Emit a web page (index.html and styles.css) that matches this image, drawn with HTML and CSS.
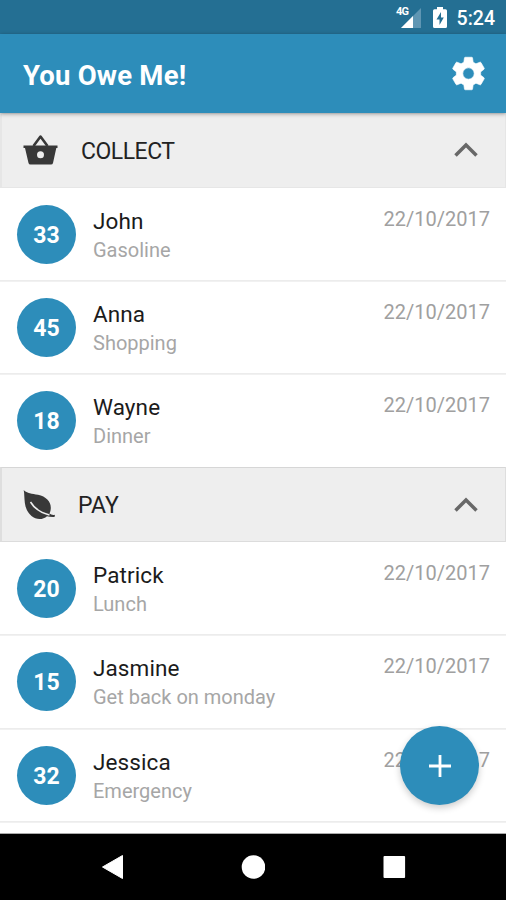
FILE: index.html
```html
<!DOCTYPE html>
<html lang="en">
<head>
<meta charset="utf-8">
<title>You Owe Me!</title>
<link rel="stylesheet" href="styles.css">
</head>
<body>
<div class="screen">
  <div class="status">
    <svg class="signal" width="28" height="22" viewBox="0 0 28 22"><path d="M27 1V21H7z" fill="#5f96b3"/><path d="M19 9V21H7z" fill="#fff"/></svg>
    <span class="network">4G</span>
    <svg class="battery" width="14" height="21" viewBox="0 0 14 21"><path d="M4 0h6v2.300h2.500q1.500 0 1.500 1.500v15.700q0 1.500-1.500 1.500h-11Q0 21 0 19.500V3.800q0-1.500 1.500-1.500H4z" fill="#fff"/><path d="M8 5L3.500 12.500H6.500V18L10.800 10.500H8z" fill="#246f93"/></svg>
    <span class="clock">5:24</span>
  </div>
  <header class="appbar">
    <h1>You Owe Me!</h1>
    <svg class="gear" width="39" height="39" viewBox="0 0 24 24"><path fill="#fff" stroke="#fff" stroke-width=".4" d="M19.430 12.980c.04-.32.07-.64.07-.98s-.03-.66-.07-.98l2.110-1.650c.19-.15.24-.42.12-.64l-2-3.460c-.12-.22-.39-.3-.61-.22l-2.490 1c-.52-.4-1.080-.73-1.690-.98l-.38-2.650C14.460 2.180 14.250 2 14 2h-4c-.25 0-.46.18-.49.42l-.38 2.650c-.61.25-1.170.59-1.690.98l-2.490-1c-.23-.09-.49 0-.61.22l-2 3.460c-.13.22-.07.49.12.64l2.110 1.650c-.04.32-.07.65-.07.98s.03.66.07.98l-2.110 1.650c-.19.15-.24.42-.12.64l2 3.460c.12.22.39.3.61.22l2.490-1c.52.4 1.080.73 1.690.98l.38 2.650c.03.24.24.42.49.42h4c.25 0 .46-.18.49-.42l.38-2.650c.61-.25 1.170-.59 1.690-.98l2.490 1c.23.09.49 0 .61-.22l2-3.460c.12-.22.07-.49-.12-.64l-2.110-1.650zM12 15.500c-1.930 0-3.500-1.570-3.500-3.500s1.570-3.500 3.500-3.500 3.500 1.570 3.500 3.500-1.570 3.500-3.500 3.500z"/></svg>
  </header>
  <main class="content">
    <section>
      <div class="group">
        <svg width="36" height="32" viewBox="0 0 36 32"><path d="M10.500 12L17.500 2.500L24.500 12" fill="none" stroke="#383838" stroke-width="2.600" stroke-linejoin="round"/><path d="M.5 11.500H34.500V14H33.300L30 29q-.4 1.500-2 1.500H7.500q-1.600 0-2-1.500L2 14H.5z" fill="#383838"/><circle cx="17.500" cy="20.800" r="3.500" fill="#eee"/></svg>
        <h2 class="collect">COLLECT</h2>
        <svg class="chevron" width="26" height="18" viewBox="0 0 26 18"><path d="M2.500 14.500L13 4L23.500 14.500" fill="none" stroke="#686868" stroke-width="3.500"/></svg>
      </div>
      <div class="row"><span class="amount">33</span><div class="info"><div class="name">John</div><div class="note">Gasoline</div></div><time>22/10/2017</time></div>
      <div class="row"><span class="amount">45</span><div class="info"><div class="name">Anna</div><div class="note">Shopping</div></div><time>22/10/2017</time></div>
      <div class="row"><span class="amount">18</span><div class="info"><div class="name">Wayne</div><div class="note">Dinner</div></div><time>22/10/2017</time></div>
    </section>
    <section>
      <div class="group outlined">
        <svg width="36" height="32" viewBox="0 0 36 32"><path d="M.7 1C4 4.500 9 4.800 15 5.800C23 7.500 28 12.500 27.800 19C27.700 21.500 27.200 23 26.400 24.600C28 25.800 30 26.200 32 25.700L31.500 28C28.500 28.300 26 27.800 24 27.200C20 31 13 31 8.500 27C1.500 20.600 1.800 14 1.300 7Q1.200 3.500.7 1z" fill="#383838"/><path d="M7.500 13C11 19 17 23.500 26.500 26" fill="none" stroke="#eee" stroke-width="1.500"/></svg>
        <h2 class="pay">PAY</h2>
        <svg class="chevron" width="26" height="18" viewBox="0 0 26 18"><path d="M2.500 14.500L13 4L23.500 14.500" fill="none" stroke="#686868" stroke-width="3.500"/></svg>
      </div>
      <div class="row"><span class="amount">20</span><div class="info"><div class="name">Patrick</div><div class="note">Lunch</div></div><time>22/10/2017</time></div>
      <div class="row"><span class="amount">15</span><div class="info"><div class="name">Jasmine</div><div class="note">Get back on monday</div></div><time>22/10/2017</time></div>
      <div class="row"><span class="amount">32</span><div class="info"><div class="name">Jessica</div><div class="note">Emergency</div></div><time>22/10/2017</time></div>
      <div class="row"></div>
    </section>
  </main>
  <div class="fab"><svg width="24" height="24" viewBox="0 0 24 24"><path d="M12 1V23M1 12H23" stroke="#fff" stroke-width="2.800"/></svg></div>
  <nav class="nav">
    <svg width="24" height="26" viewBox="0 0 24 26"><path d="M22.500 1.500V24.500L2.500 13z" fill="#fff" stroke="#fff" stroke-linejoin="round"/></svg>
    <svg width="24" height="26" viewBox="0 0 24 26"><circle cx="12.500" cy="13" r="11.800" fill="#fff"/></svg>
    <svg width="24" height="26" viewBox="0 0 24 26"><rect x="1.500" y="2" width="21.600" height="22" rx="1" fill="#fff"/></svg>
  </nav>
</div>
</body>
</html>
```
FILE: styles.css
```css
* { box-sizing: border-box; }
body { margin: 0; font-family: Roboto, sans-serif; background: #fff; }
h1, h2 { margin: 0; }
svg { display: block; flex: none; }
.screen { position: relative; width: 506px; height: 900px; overflow: hidden; display: flex; flex-direction: column; }
.status { position: relative; flex: none; height: 34px; background: #246f93; color: #fff; display: flex; align-items: center; justify-content: flex-end; padding-right: 11px; }
.signal { margin: 1px 11px 0 0; }
.network { position: absolute; left: 396px; top: 6px; font-size: 11px; line-height: 12px; font-weight: 700; letter-spacing: -0.8px; }
.battery { margin: 1px 10px 0 0; }
.clock { font-size: 19.5px; font-weight: 500; line-height: 22px; margin-top: 3px; }
.appbar { position: relative; z-index: 1; flex: none; height: 79px; background: #2d8dba; color: #fff; display: flex; align-items: center; justify-content: space-between; padding: 0 18px 0 23px; box-shadow: 0 1px 4px rgba(0, 0, 0, .35); }
.appbar h1 { font-size: 27.5px; font-weight: 700; line-height: 32px; margin-top: 4px; letter-spacing: .2px; }
.content { flex: none; height: 720.5px; overflow: hidden; border-bottom: 1px solid #aaa; }
.group { height: 74.7px; background: #eee; border: 1px solid #e6e6e6; border-left-width: 2px; display: flex; align-items: center; padding: 0 26px 0 21px; }
.outlined { border-color: #d6d6d6 #dedede #dcdcdc; }
.group h2 { font-size: 23px; line-height: 28px; font-weight: 400; color: #222; margin-top: 3px; }
.group .collect { margin-left: 22px; letter-spacing: -.5px; }
.group .pay { margin-left: 19px; }
.group .chevron { margin-left: auto; }
.row { height: 93.25px; border-bottom: 1px solid #ececec; display: flex; align-items: flex-start; padding: 17px 16px 0 17px; }
.row + .row { border-top: 1px solid #f1f1f1; padding-top: 16px; }
.row:last-child { border-bottom: 0; }
.amount { flex: none; width: 59px; height: 59px; border-radius: 50%; background: #2d8dba; color: #fff; font-size: 23px; font-weight: 700; display: flex; align-items: center; justify-content: center; padding-top: 2px; }
.info { margin-left: 17px; flex: 1; }
.name { font-size: 22.5px; line-height: 28px; margin-top: 2px; color: #1b1b1b; letter-spacing: .1px; }
.note { font-size: 20px; line-height: 28px; margin-top: 1px; color: #a6a6a6; }
time { font-size: 20px; line-height: 28px; color: #a0a0a0; }
.fab { position: absolute; left: 400px; top: 726px; width: 79px; height: 79px; border-radius: 50%; background: #2d8dba; display: flex; align-items: center; justify-content: center; box-shadow: 0 3px 7px rgba(0, 0, 0, .2); }
.nav { flex: 1; background: #000; display: flex; align-items: center; justify-content: center; gap: 117px; }
```
